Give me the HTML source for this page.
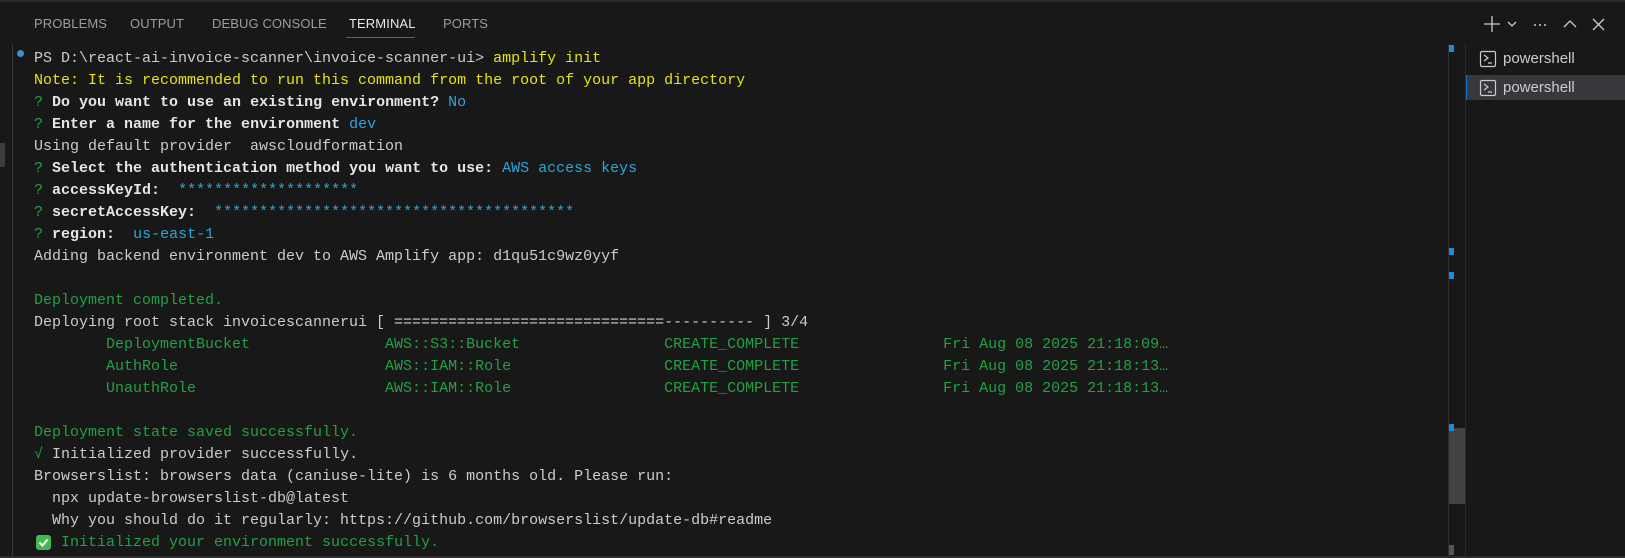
<!DOCTYPE html>
<html><head><meta charset="utf-8"><style>
body{margin:0;width:1625px;height:558px;background:#181818;overflow:hidden;position:relative;font-family:"Liberation Sans",sans-serif}
.tabs span{position:absolute;top:16px;font-size:13px;color:#9d9d9d;letter-spacing:0.1px}
.term{position:absolute;left:34px;top:48px;font-family:"Liberation Mono",monospace;font-size:15px;line-height:22px;color:#cccccc;white-space:pre}
.y{color:#e5e510}.g{color:#23a044}.q{color:#23a044}.b{font-weight:bold;color:#e5e5e5}.c{color:#2aa7d8}
.mk{position:absolute;left:1449px;width:5px;height:7px;background:#1f8ad2}
</style></head><body>
<div style="position:absolute;left:0;top:0;width:1625px;height:2px;background:#2b2b2b"></div>
<div class="tabs">
<span style="left:34px">PROBLEMS</span>
<span style="left:130px">OUTPUT</span>
<span style="left:212px">DEBUG CONSOLE</span>
<span style="left:349px;color:#e7e7e7">TERMINAL</span>
<span style="left:443px">PORTS</span>
</div>
<div style="position:absolute;left:346px;top:37px;width:69px;height:1px;background:#0078d4"></div>
<!-- header icons -->
<svg style="position:absolute;left:1482px;top:14px" width="140" height="20" viewBox="0 0 140 20" fill="none" stroke="#cccccc" stroke-width="1.3">
<path d="M10 2V18M2 10H18"/>
<path d="M26 8l4 4 4-4"/>
<circle cx="53" cy="11" r="1" fill="#ccc" stroke="none"/><circle cx="58" cy="11" r="1" fill="#ccc" stroke="none"/><circle cx="63" cy="11" r="1" fill="#ccc" stroke="none"/>
<path d="M82 13l6-6 6 6"/>
<path d="M111 5l11 11M122 5l-11 11"/>
</svg>
<!-- left gutter -->
<div style="position:absolute;left:12px;top:44px;width:1px;height:514px;background:#3a3a3a"></div>
<div style="position:absolute;left:0;top:143px;width:5px;height:24px;background:#3c3c3c"></div>
<div style="position:absolute;left:17px;top:50px;width:7px;height:7px;border-radius:50%;background:#3794d1"></div>
<div class="term">PS D:\react-ai-invoice-scanner\invoice-scanner-ui&gt; <span class="y">amplify init</span>
<span class="y">Note: It is recommended to run this command from the root of your app directory</span>
<span class="q">?</span> <span class="b">Do you want to use an existing environment?</span> <span class="c">No</span>
<span class="q">?</span> <span class="b">Enter a name for the environment</span> <span class="c">dev</span>
Using default provider  awscloudformation
<span class="q">?</span> <span class="b">Select the authentication method you want to use:</span> <span class="c">AWS access keys</span>
<span class="q">?</span> <span class="b">accessKeyId:</span>  <span class="c">********************</span>
<span class="q">?</span> <span class="b">secretAccessKey:</span>  <span class="c">****************************************</span>
<span class="q">?</span> <span class="b">region:</span>  <span class="c">us-east-1</span>
Adding backend environment dev to AWS Amplify app: d1qu51c9wz0yyf

<span class="g">Deployment completed.</span>
Deploying root stack invoicescannerui [ ==============================---------- ] 3/4
<span class="g">        DeploymentBucket               AWS::S3::Bucket                CREATE_COMPLETE                Fri Aug 08 2025 21:18:09…</span>
<span class="g">        AuthRole                       AWS::IAM::Role                 CREATE_COMPLETE                Fri Aug 08 2025 21:18:13…</span>
<span class="g">        UnauthRole                     AWS::IAM::Role                 CREATE_COMPLETE                Fri Aug 08 2025 21:18:13…</span>

<span class="g">Deployment state saved successfully.</span>
<span class="g">√</span> Initialized provider successfully.
Browserslist: browsers data (caniuse-lite) is 6 months old. Please run:
  npx update-browserslist-db@latest
  Why you should do it regularly: https://github.com/browserslist/update-db#readme
   <span class="g">Initialized your environment successfully.</span></div>
<div style="position:absolute;left:36px;top:535px;width:15px;height:15px;border-radius:3px;background:#3fb950"></div>
<svg style="position:absolute;left:36px;top:535px" width="15" height="15"><path d="M3.5 7.5l3 3 5-6" stroke="#fff" stroke-width="2" fill="none"/></svg>
<!-- scrollbar -->
<div style="position:absolute;left:1448px;top:44px;width:1px;height:514px;background:#2e2e2e"></div>
<div style="position:absolute;left:1449px;top:428px;width:17px;height:76px;background:#434343"></div>
<div class="mk" style="top:45px"></div>
<div class="mk" style="top:248px"></div>
<div class="mk" style="top:272px"></div>
<div class="mk" style="top:424px"></div>
<div style="position:absolute;left:1449px;top:545px;width:5px;height:10px;background:#555"></div>
<div style="position:absolute;left:1465px;top:44px;width:1px;height:514px;background:#2b2b2b"></div>
<div style="position:absolute;left:0;top:556px;width:1625px;height:2px;background:#2b2b2b"></div>
<!-- right list -->
<div style="position:absolute;left:1466px;top:75px;width:159px;height:25px;background:#37373d;border-left:1px solid #0078d4"></div>
<svg style="position:absolute;left:1479px;top:50px" width="18" height="18" viewBox="0 0 18 18" fill="none" stroke="#cccccc" stroke-width="1.2"><rect x="1.5" y="1.5" width="15" height="15" rx="1.5"/><path d="M5 5l4 3-4 3M9 13h4"/></svg>
<svg style="position:absolute;left:1479px;top:79px" width="18" height="18" viewBox="0 0 18 18" fill="none" stroke="#cccccc" stroke-width="1.2"><rect x="1.5" y="1.5" width="15" height="15" rx="1.5"/><path d="M5 5l4 3-4 3M9 13h4"/></svg>
<div style="position:absolute;left:1503px;top:50px;font-size:15px;color:#cccccc">powershell</div>
<div style="position:absolute;left:1503px;top:79px;font-size:15px;color:#cccccc">powershell</div>
</body></html>
